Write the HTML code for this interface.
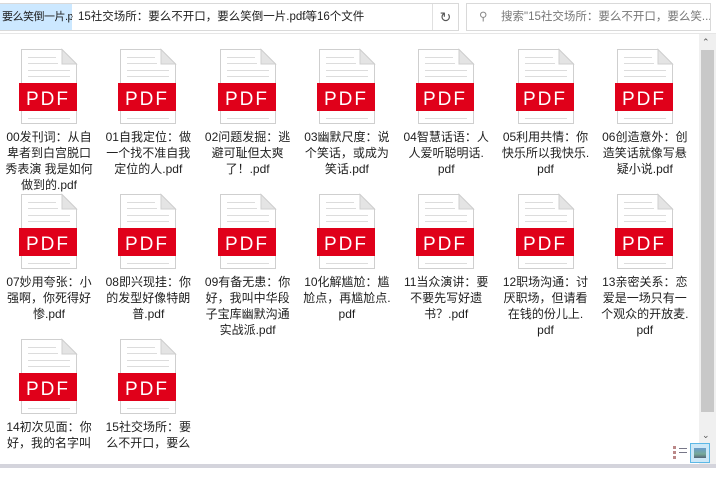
<!DOCTYPE html>
<html><head><meta charset="utf-8"><style>
*{margin:0;padding:0;box-sizing:border-box}
body{width:716px;height:468px;background:#fff;position:relative;overflow:hidden;font-family:"Liberation Sans","Noto Sans CJK SC",sans-serif;color:#1e1e1e}
.top{position:absolute;left:0;top:0;width:716px;height:34px;background:#fff;border-bottom:1px solid #e6e6e6}
.addr{position:absolute;left:0;top:3px;width:459px;height:28px;border:1px solid #d9d9d9;border-left:none}
.seg1{position:absolute;left:0;top:0;width:72px;height:26px;background:#cce8ff;font-size:11px;line-height:26px;padding-left:2px;white-space:nowrap;overflow:hidden;letter-spacing:-0.5px}
.seg2{position:absolute;left:78px;top:0;font-size:11.5px;line-height:26px;white-space:nowrap}
.chev{position:absolute;left:300px;top:0;font-size:11px;line-height:26px;color:#666}
.ref{position:absolute;left:432px;top:0;width:26px;height:26px;border-left:1px solid #e0e0e0;font-size:14px;line-height:26px;text-align:center;color:#555}
.search{position:absolute;left:466px;top:3px;width:245px;height:28px;border:1px solid #d9d9d9;font-size:11.5px;line-height:26px;color:#777;padding-left:34px;white-space:nowrap;overflow:hidden}
.it{position:absolute;width:99px;height:145px}
.doc{position:absolute;left:20px;top:0;width:57px;height:75px}
.lbl{position:absolute;left:0px;top:80px;width:98px;text-align:center;font-size:12px;line-height:16px;color:#1e1e1e;white-space:nowrap}
.sb{position:absolute;left:699px;top:34px;width:17px;height:430px;background:#f0f0f0}
.thumb{position:absolute;left:701px;top:50px;width:13px;height:362px;background:#c8c8c8}
.bot{position:absolute;left:0;top:464px;width:716px;height:4px;background:#d4d4dc}
</style></head><body>
<div class="top">
 <div class="addr"><div class="seg1">要么笑倒一片.p...</div><span style="position:absolute;left:70px;top:0;font-size:10px;line-height:26px;color:#666">›</span><div class="seg2">15社交场所：要么不开口，要么笑倒一片.pdf等16个文件</div><div class="chev">⌄</div><div class="ref">↻</div></div>
 <div class="search"><span style="position:absolute;left:12px;top:0;color:#888">⚲</span>搜索"15社交场所：要么不开口，要么笑...</div>
</div>
<svg width="0" height="0" style="position:absolute"><defs>
<g id="pdf">
<path d="M1.5 0.5H42L56.5 15V74.5H1.5Z" fill="#fff" stroke="#cfcfcf"/>
<path d="M42 0.5V15H56.5Z" fill="#e4e4e4" stroke="#cfcfcf"/>
<g stroke="#dcdcdc" stroke-width="1"><line x1="8" y1="8.5" x2="36" y2="8.5"/><line x1="8" y1="14.5" x2="38" y2="14.5"/><line x1="8" y1="21.5" x2="50" y2="21.5"/><line x1="8" y1="27.5" x2="50" y2="27.5"/><line x1="8" y1="69.5" x2="50" y2="69.5"/></g>
<rect x="-1" y="34" width="58" height="28" fill="#e0001a"/>
<text x="28" y="56" text-anchor="middle" font-family="Liberation Sans,sans-serif" font-size="19" fill="#fff" letter-spacing="2">PDF</text>
</g></defs></svg>
<div id="g"></div>
<div class="sb"></div><div class="thumb"></div>
<div style="position:absolute;left:702px;top:37px;font-size:9px;color:#555">⌃</div>
<div style="position:absolute;left:702px;top:430px;font-size:9px;color:#555">⌄</div>
<div style="position:absolute;left:673px;top:446px;width:13px;height:13px;border-left:3px dotted #b88;border-top:0"><div style="margin:2px 0 0 3px;border-top:1px solid #778;border-bottom:1px solid #778;height:5px;width:8px"></div></div>
<div style="position:absolute;left:690px;top:443px;width:20px;height:20px;border:1px solid #5cb8e6;background:#cde8f7"><div style="margin:4px 3px;width:12px;height:10px;background:linear-gradient(#6a9ccc,#7a9 60%,#567)"></div></div>
<div class="bot"></div>
<script>
var L=["00发刊词：从自|卑者到白宫脱口|秀表演 我是如何|做到的.pdf","01自我定位：做|一个找不准自我|定位的人.pdf","02问题发掘：逃|避可耻但太爽|了！.pdf","03幽默尺度：说|个笑话，或成为|笑话.pdf","04智慧话语：人|人爱听聪明话.|pdf","05利用共情：你|快乐所以我快乐.|pdf","06创造意外：创|造笑话就像写悬|疑小说.pdf","07妙用夸张：小|强啊，你死得好|惨.pdf","08即兴现挂：你|的发型好像特朗|普.pdf","09有备无患：你|好，我叫中华段|子宝库幽默沟通|实战派.pdf","10化解尴尬：尴|尬点，再尴尬点.|pdf","11当众演讲：要|不要先写好遗|书？.pdf","12职场沟通：讨|厌职场，但请看|在钱的份儿上.|pdf","13亲密关系：恋|爱是一场只有一|个观众的开放麦.|pdf","14初次见面：你|好，我的名字叫","15社交场所：要|么不开口，要么"];
var h="";
L.forEach(function(t,i){var c=i%7,r=Math.floor(i/7);h+='<div class="it" style="left:'+(c*99.3)+'px;top:'+(49+r*145)+'px"><svg class="doc" viewBox="0 0 57 75" style="overflow:visible"><use href="#pdf"/></svg><div class="lbl">'+t.split("|").join("<br>")+'</div></div>';});
document.getElementById("g").innerHTML=h;
</script>
</body></html>
